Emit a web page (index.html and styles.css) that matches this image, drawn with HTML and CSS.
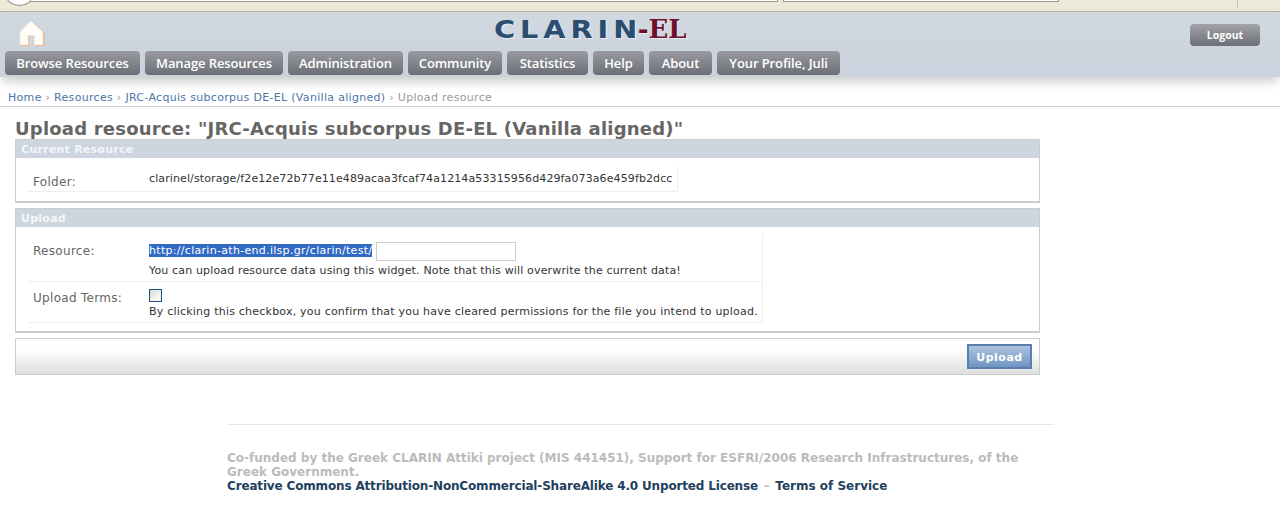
FILE: index.html
```html
<!DOCTYPE html>
<html lang="en">
<head>
<meta charset="UTF-8" />
<title>Upload resource - CLARIN-EL</title>
<link rel="stylesheet" href="styles.css">
</head>
<body>

<div class="chrome">
    <div class="chrome-circle"></div>
    <div class="chrome-url"></div>
    <div class="chrome-search"></div>
    <div class="chrome-sep"></div>
</div>

<div class="header">
    <div class="header-top">
        <a class="home" href="#">
            <svg width="28" height="27" viewBox="0 0 28 27">
                <path d="M13.5 1 L25.5 12 V25.5 H17 V15.5 H10 V25.5 H2.5 V12 Z" fill="#ef9f5c" transform="translate(0.8 0.6)"/>
                <path d="M13 1 L25 12 V25 H16.5 V15.5 H10 V25 H2 V12 Z" fill="#fffdf8" stroke="#fbe6d0" stroke-width="0.8" stroke-linejoin="round"/>
            </svg>
        </a>
        <div class="logo"><span class="logo-a">CLARI<span class="logo-n">N</span></span><span class="logo-b">-EL</span></div>
        <a class="logout" href="#">Logout</a>
    </div>
    <div class="nav">
        <a href="#">Browse Resources</a>
        <a href="#">Manage Resources</a>
        <a href="#">Administration</a>
        <a href="#">Community</a>
        <a href="#">Statistics</a>
        <a href="#">Help</a>
        <a href="#">About</a>
        <a href="#">Your Profile, Juli</a>
    </div>
</div>

<div class="crumbs">
    <a href="#">Home</a> <span class="sep">&rsaquo;</span>
    <a href="#">Resources</a> <span class="sep">&rsaquo;</span>
    <a href="#">JRC-Acquis subcorpus DE-EL (Vanilla aligned)</a> <span class="sep">&rsaquo;</span>
    Upload resource
</div>

<div class="content">
    <h1>Upload resource: "JRC-Acquis subcorpus DE-EL (Vanilla aligned)"</h1>

    <div class="module">
        <h2>Current Resource</h2>
        <div class="module-body">
            <table class="form-table">
                <tr>
                    <th>Folder:</th>
                    <td class="path">clarinel/storage/f2e12e72b77e11e489acaa3fcaf74a1214a53315956d429fa073a6e459fb2dcc</td>
                </tr>
            </table>
        </div>
    </div>

    <div class="module">
        <h2>Upload</h2>
        <div class="module-body upload-body">
            <table class="form-table">
                <tr>
                    <th>Resource:</th>
                    <td>
                        <div class="file-line"><span class="selected">http://clarin-ath-end.ilsp.gr/clarin/test/</span><input type="text" class="file-input"></div>
                        <p class="help">You can upload resource data using this widget. Note that this will overwrite the current data!</p>
                    </td>
                </tr>
                <tr>
                    <th>Upload Terms:</th>
                    <td>
                        <div class="check-line"><input type="checkbox" class="check"></div>
                        <p class="help terms">By clicking this checkbox, you confirm that you have cleared permissions for the file you intend to upload.</p>
                    </td>
                </tr>
            </table>
        </div>
    </div>

    <div class="submit-row">
        <button type="button">Upload</button>
    </div>
</div>

<div class="footer">
    <p>Co-funded by the Greek CLARIN Attiki project (MIS 441451), Support for ESFRI/2006 Research Infrastructures, of the Greek Government.</p>
    <p><a class="license" href="#">Creative Commons Attribution-NonCommercial-ShareAlike 4.0 Unported License</a> <span class="dash">&ndash;</span> <a href="#">Terms of Service</a></p>
</div>

</body>
</html>
```
FILE: styles.css
```css
body {
  margin: 0;
  background-color: #fff;
  font-family: "DejaVu Sans", Verdana, sans-serif;
  font-size: 11px;
  color: #333;
  overflow: hidden;
}
a {
  text-decoration: none;
}
.chrome {
  position: relative;
  height: 11px;
  background-color: #ece9d8;
  border-bottom: 1px solid #b5b39f;
  overflow: hidden;
}
.chrome-circle {
  position: absolute;
  left: 6px;
  top: -14px;
  width: 25px;
  height: 18px;
  border: 1px solid #8a8a80;
  border-radius: 50%;
  background-color: #fff;
}
.chrome-url {
  position: absolute;
  left: 30px;
  top: -10px;
  width: 746px;
  height: 10px;
  background-color: #fff;
  border: 1px solid #9a9a8e;
}
.chrome-search {
  position: absolute;
  left: 783px;
  top: -10px;
  width: 274px;
  height: 10px;
  background-color: #fff;
  border: 1px solid #9a9a8e;
}
.chrome-sep {
  position: absolute;
  left: 1237px;
  top: 0;
  width: 1px;
  height: 8px;
  background-color: #c8c6b4;
}
.header {
  height: 65px;
  background: linear-gradient(#d0d8e0, #cbd2dd);
  box-shadow: 0 6px 10px -2px rgba(0,0,0,0.22);
  position: relative;
  display: flex;
  flex-direction: column;
}
.header-top {
  height: 39px;
  display: flex;
  justify-content: space-between;
  padding-right: 20px;
  position: relative;
}
.home {
  margin: 8px 0 0 18px;
  display: block;
  height: 27px;
}
.logo {
  position: absolute;
  left: 494px;
  top: 2px;
  line-height: 30px;
  white-space: nowrap;
  text-shadow: 1px 1px 0 rgba(255,255,255,0.5);
}
.logo-a {
  display: inline-block;
  font-family: "DejaVu Sans", sans-serif;
  font-weight: 700;
  font-size: 25px;
  letter-spacing: 4.3px;
  color: #2b4d70;
  transform: scaleX(1.15);
  transform-origin: left center;
  margin-right: 19px;
}
.logo-n {
  letter-spacing: 0;
}
.logo-b {
  font-family: "DejaVu Serif", serif;
  font-weight: 700;
  font-size: 26px;
  color: #6f0f2c;
}
.logout {
  margin-top: 12px;
  height: 22px;
  line-height: 22px;
  width: 70px;
  text-align: center;
  border-radius: 4px;
  background: linear-gradient(#a2a4a8, #6c6f75);
  color: #fff;
  font-family: "Open Sans", sans-serif;
  font-weight: 700;
  font-size: 10.5px;
}
.nav {
  display: grid;
  grid-template-columns: 135px 138px 115px 94px 81px 51px 63px 123px;
  gap: 5px;
  padding-left: 5px;
}
.nav a {
  height: 24px;
  line-height: 24px;
  text-align: center;
  border-radius: 4px;
  background: linear-gradient(#999ba0, #6b6e75);
  color: #fff;
  font-family: "Open Sans", sans-serif;
  font-weight: 600;
  font-size: 13px;
  letter-spacing: -0.1px;
  white-space: nowrap;
}
.crumbs {
  height: 29px;
  line-height: 41px;
  padding-left: 8px;
  border-bottom: 1px solid #ccc;
  color: #999;
  letter-spacing: 0.31px;
}
.crumbs a {
  color: #4d76a8;
}
.sep {
  color: #999;
}
.content {
  width: 1025px;
  margin-left: 15px;
}
h1 {
  margin: 12px 0 0;
  font-size: 18px;
  line-height: 20px;
  font-weight: 700;
  letter-spacing: 0.2px;
  color: #666;
  white-space: nowrap;
}
.module {
  border: 1px solid #ccc;
  border-bottom-width: 2px;
  margin-bottom: 5px;
}
.module h2 {
  margin: 0;
  height: 18px;
  line-height: 20px;
  padding-left: 5px;
  background-color: #cdd5df;
  color: #f4f6f8;
  font-size: 11px;
  font-weight: 700;
  letter-spacing: 0.25px;
}
.module-body {
  padding: 7px 12px 9px;
}
.upload-body {
  padding-bottom: 8px;
}
.form-table {
  border-collapse: collapse;
}
.form-table th {
  width: 116px;
  box-sizing: border-box;
  padding: 10px 0 0 5px;
  vertical-align: top;
  text-align: left;
  font-weight: 400;
  font-size: 12px;
  letter-spacing: 0.3px;
  color: #666;
  border-bottom: 1px solid #eee;
}
.form-table tr + tr th {
  padding-top: 9px;
}
.form-table td {
  padding: 6px 4px 3px 5px;
  vertical-align: top;
  border-bottom: 1px solid #eee;
  border-right: 1px solid #eee;
  white-space: nowrap;
}
.form-table td.path {
  line-height: 16px;
  letter-spacing: 0.11px;
  padding-bottom: 4px;
}
.file-line {
  display: flex;
  align-items: flex-start;
  height: 24px;
}
.selected {
  margin-top: 4px;
  background-color: #316ac5;
  color: #fff;
  line-height: 13px;
  letter-spacing: 0.3px;
}
.file-input {
  width: 140px;
  height: 19px;
  box-sizing: border-box;
  margin: 2px 0 0 4px;
  border: 1px solid #ccc;
  background-color: #fff;
}
.check-line {
  height: 16px;
}
.check {
  appearance: none;
  display: block;
  margin: 1px 0 0;
  width: 13px;
  height: 13px;
  box-sizing: border-box;
  border: 1px solid #1c5180;
  border-radius: 0;
  background: linear-gradient(135deg, #dcdcd6, #fff);
}
.help {
  margin: 0;
  line-height: 14px;
  color: #333;
  letter-spacing: 0.156px;
}
.help.terms {
  letter-spacing: 0.215px;
}
.submit-row {
  height: 35px;
  border: 1px solid #ccc;
  display: flex;
  justify-content: flex-end;
  align-items: center;
  padding-right: 7px;
  background: linear-gradient(#fff 30%, #dedede);
}
.submit-row button {
  width: 65px;
  height: 25px;
  padding: 2px 0 0;
  border: 2px solid #5a7eb0;
  background: linear-gradient(#adc4de, #7095c2);
  color: #fff;
  font-family: "DejaVu Sans", sans-serif;
  font-weight: 700;
  font-size: 11px;
  letter-spacing: 0.5px;
}
.footer {
  width: 827px;
  margin: 49px 0 0 227px;
  padding-top: 26px;
  border-top: 1px solid #e6e6e6;
  font-size: 12px;
  font-weight: 700;
  line-height: 14px;
  color: #bbb;
}
.footer p {
  margin: 0;
}
.footer a {
  color: #223f5e;
}
.footer a.license {
  letter-spacing: -0.16px;
}
.dash {
  margin: 0 1.5px;
}
```
